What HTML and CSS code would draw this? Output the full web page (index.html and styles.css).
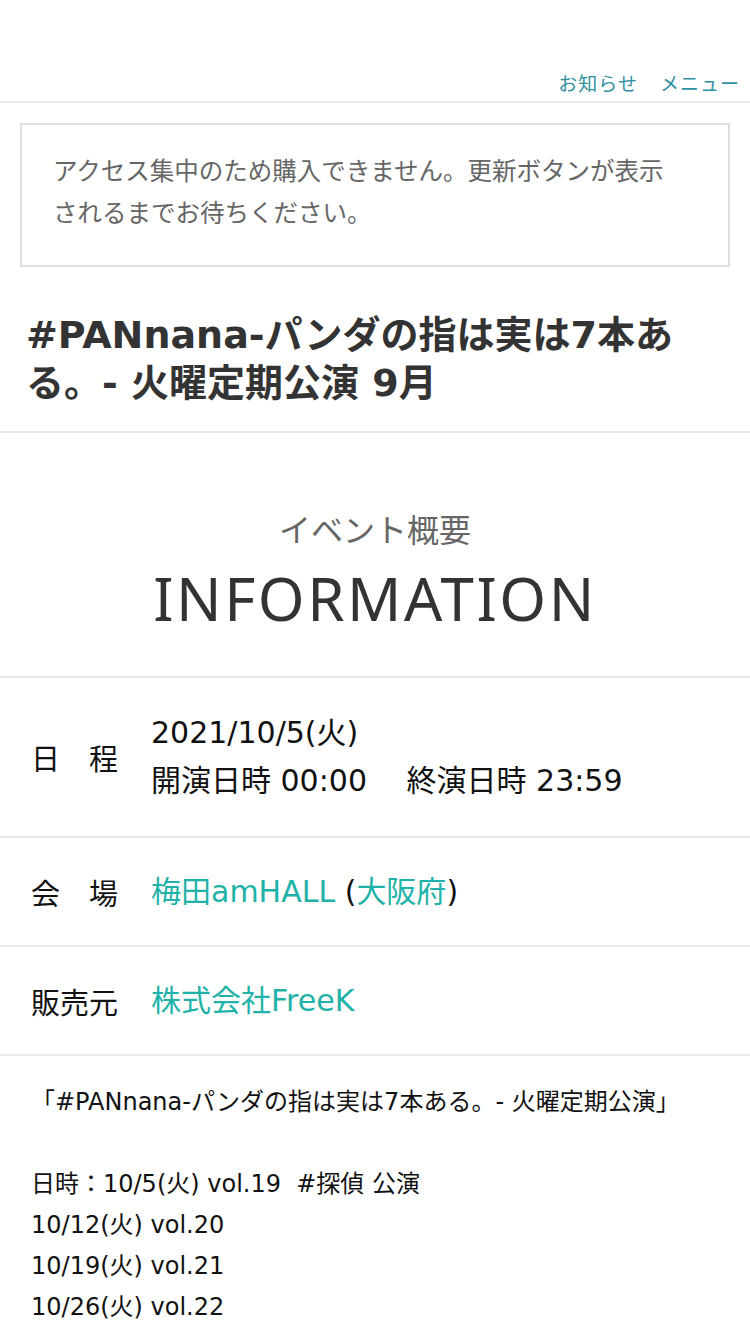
FILE: index.html
```html
<!DOCTYPE html>
<html lang="ja">
<head>
<meta charset="utf-8">
<title>#PANnana-パンダの指は実は7本ある。- 火曜定期公演 9月</title>
<link rel="stylesheet" href="styles.css">
</head>
<body>
<header class="site-header">
  <nav class="header-nav">
    <a class="nav-link" href="#">お知らせ</a>
    <a class="nav-link" href="#">メニュー</a>
  </nav>
</header>
<main>
  <div class="notice">
    <p class="notice-text">アクセス集中のため購入できません。更新ボタンが表示されるまでお待ちください。</p>
  </div>
  <h1 class="event-title">#PANnana-パンダの指は実は7本ある。- 火曜定期公演 9月</h1>
  <section class="info-head">
    <p class="info-sub">イベント概要</p>
    <h2 class="info-main">INFORMATION</h2>
  </section>
  <dl class="info-table">
    <div class="info-row info-row-tall">
      <dt class="info-label">日　程</dt>
      <dd class="info-value">2021/10/5(火)<br>開演日時 00:00　 終演日時 23:59</dd>
    </div>
    <div class="info-row">
      <dt class="info-label">会　場</dt>
      <dd class="info-value"><a class="link" href="#">梅田amHALL</a> (<a class="link" href="#">大阪府</a>)</dd>
    </div>
    <div class="info-row">
      <dt class="info-label">販売元</dt>
      <dd class="info-value"><a class="link" href="#">株式会社FreeK</a></dd>
    </div>
  </dl>
  <div class="description">
    <p class="desc-text">「#PANnana-パンダの指は実は7本ある。- 火曜定期公演」<br><br>日時：10/5(火) vol.19 &nbsp;#探偵 公演<br>10/12(火) vol.20<br>10/19(火) vol.21<br>10/26(火) vol.22</p>
  </div>
</main>
</body>
</html>
```

FILE: styles.css
```css
* { box-sizing: border-box; }
html, body {
  margin: 0;
  padding: 0;
  background: #fff;
}
body {
  font-family: "DejaVu Sans", "Noto Sans CJK JP", sans-serif;
  color: #111;
  width: 750px;
  overflow: hidden;
}
a { text-decoration: none; }

.site-header {
  height: 103px;
  border-bottom: 2px solid #e6eaea;
  display: flex;
  align-items: flex-end;
  justify-content: flex-end;
  padding: 0 10px 5px 0;
}
.header-nav {
  display: flex;
  gap: 22px;
}
.nav-link {
  font-family: "Noto Sans CJK JP", sans-serif;
  color: #2f8fa2;
  font-size: 19px;
  line-height: 26px;
  letter-spacing: 1px;
}

.notice {
  margin: 20px 20px 0;
  border: 2px solid #dcdfdf;
  padding: 24px 55px 32px 31px;
}
.notice-text {
  margin: 0;
  font-family: "Noto Sans CJK JP", sans-serif;
  font-size: 24.5px;
  line-height: 42px;
  color: #666;
}

.event-title {
  margin: 0;
  padding: 44px 30px 24px 26px;
  font-size: 38px;
  line-height: 48px;
  font-weight: 700;
  color: #333;
  border-bottom: 2px solid #e6eaea;
}

.info-head {
  text-align: center;
  padding: 73px 0 42px;
  border-bottom: 2px solid #e6eaea;
}
.info-sub {
  margin: 0;
  font-family: "Noto Sans CJK JP", sans-serif;
  font-size: 32px;
  line-height: 44px;
  color: #666;
}
.info-main {
  margin: 12px 0 0;
  font-family: "Noto Sans", sans-serif;
  font-size: 60px;
  line-height: 72px;
  font-weight: 400;
  letter-spacing: 2.5px;
  color: #333;
}

.info-table {
  margin: 0;
}
.info-row {
  display: flex;
  align-items: center;
  min-height: 109px;
  border-bottom: 2px solid #e6eaea;
  padding: 0 0 0 31px;
}
.info-row-tall {
  min-height: 160px;
}
.info-label {
  width: 120px;
  flex: none;
  font-family: "Noto Sans CJK JP", sans-serif;
  font-size: 29px;
  line-height: 48px;
  color: #111;
}
.info-value {
  margin: 0;
  font-size: 30px;
  line-height: 48px;
  color: #111;
}
.link {
  color: #1fb2a8;
}

.description {
  padding: 26px 31px 0;
}
.desc-text {
  margin: 0;
  font-size: 24px;
  line-height: 41px;
  color: #111;
}
```
